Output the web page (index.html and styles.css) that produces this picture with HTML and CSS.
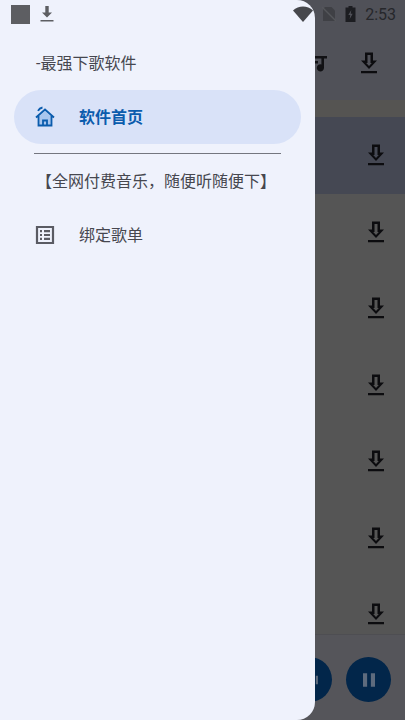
FILE: index.html
```html
<!DOCTYPE html>
<html lang="zh-CN">
<head>
  <meta charset="UTF-8" />
  <meta name="viewport" content="width=device-width, initial-scale=1.0" />
  <title>下歌软件</title>
  <link rel="stylesheet" href="styles.css">
</head>
<body>
  <div class="app">

    <!-- Page behind the scrim -->
    <div class="main">
      <div class="header">
        <svg class="music-icon" viewBox="0 0 24 24"><path d="M5 5h16v2.600h-3v9.200a3.600 3.600 0 1 1-2.600-3.400V7.600H5zM5 10h7v2.400H5z"/></svg>
        <svg class="dl-icon" viewBox="0 0 24 24"><path d="M8 1.500h8v8h4L12 18 4 9.500h4zM10.500 4v8H9.200L12 15l2.800-3h-1.300V4zM4 20h16v2.200H4z" fill-rule="evenodd"/></svg>
      </div>
      <div class="band"></div>
      <div class="list">
        <div class="row row-active"><svg class="dl-icon" viewBox="0 0 24 24"><path d="M8 1.500h8v8h4L12 18 4 9.500h4zM10.500 4v8H9.200L12 15l2.800-3h-1.300V4zM4 20h16v2.200H4z" fill-rule="evenodd"/></svg></div>
        <div class="row"><svg class="dl-icon" viewBox="0 0 24 24"><path d="M8 1.500h8v8h4L12 18 4 9.500h4zM10.500 4v8H9.200L12 15l2.800-3h-1.300V4zM4 20h16v2.200H4z" fill-rule="evenodd"/></svg></div>
        <div class="row"><svg class="dl-icon" viewBox="0 0 24 24"><path d="M8 1.500h8v8h4L12 18 4 9.500h4zM10.500 4v8H9.200L12 15l2.800-3h-1.300V4zM4 20h16v2.200H4z" fill-rule="evenodd"/></svg></div>
        <div class="row"><svg class="dl-icon" viewBox="0 0 24 24"><path d="M8 1.500h8v8h4L12 18 4 9.500h4zM10.500 4v8H9.200L12 15l2.800-3h-1.300V4zM4 20h16v2.200H4z" fill-rule="evenodd"/></svg></div>
        <div class="row"><svg class="dl-icon" viewBox="0 0 24 24"><path d="M8 1.500h8v8h4L12 18 4 9.500h4zM10.500 4v8H9.200L12 15l2.800-3h-1.300V4zM4 20h16v2.200H4z" fill-rule="evenodd"/></svg></div>
        <div class="row"><svg class="dl-icon" viewBox="0 0 24 24"><path d="M8 1.500h8v8h4L12 18 4 9.500h4zM10.500 4v8H9.200L12 15l2.800-3h-1.300V4zM4 20h16v2.200H4z" fill-rule="evenodd"/></svg></div>
        <div class="row"><svg class="dl-icon" viewBox="0 0 24 24"><path d="M8 1.500h8v8h4L12 18 4 9.500h4zM10.500 4v8H9.200L12 15l2.800-3h-1.300V4zM4 20h16v2.200H4z" fill-rule="evenodd"/></svg></div>
      </div>
      <div class="player">
        <div class="round-btn">
          <svg class="skip-icon" viewBox="0 0 24 24"><path d="M8 6l10 6-10 6zM19 7h2.500v10H19z"/></svg>
        </div>
        <div class="round-btn">
          <svg class="pause-icon" viewBox="0 0 24 24"><path d="M4 3h5.500v18H4zM14.500 3H20v18h-5.500z"/></svg>
        </div>
      </div>
    </div>

    <!-- Drawer -->
    <div class="drawer">
      <div class="drawer-title">-最强下歌软件</div>
      <div class="nav-item nav-item-active">
        <svg class="nav-icon" viewBox="0 0 24 24">
          <path class="home-fill" d="M6 11.500L12 6l6 5.500V20H6z"/>
          <path class="home-line" d="M3 12.500L12 4.500l9 8M5.500 11v9.500h13V11M10 20.500v-5h4v5"/>
          <path class="home-line" d="M5 5.800C6 3.800 7.500 2.800 9.500 2.500"/>
        </svg>
        <span class="nav-label">软件首页</span>
      </div>
      <div class="divider"></div>
      <div class="section-title">【全网付费音乐，随便听随便下】</div>
      <div class="nav-item">
        <svg class="nav-icon" viewBox="0 0 24 24">
          <path class="list-line" d="M4 4h16v16H4z"/>
          <path class="list-line" d="M7 8.200h2M11 8.200h6M7 12h2M11 12h6M7 15.800h2M11 15.800h6"/>
        </svg>
        <span class="nav-label">绑定歌单</span>
      </div>
    </div>

    <!-- Status bar, over everything -->
    <div class="statusbar">
      <div class="status-left">
        <div class="app-square"></div>
        <svg class="status-dl" viewBox="0 0 18 18"><path d="M7.300 1h3.400v6.500h3.300L9 12.500 4 7.500h3.300zM2.500 15h13v1.500h-13z"/></svg>
      </div>
      <div class="status-right">
        <svg class="wifi" viewBox="0 0 20 16"><path d="M0 4.500C5.500-.7 14.500-.7 20 4.500L10 16z"/></svg>
        <svg class="nosim" viewBox="0 0 14 16"><path d="M3 1h6.500L13 4.500V15H1V3z"/><path class="nosim-slash" d="M0 1l14 14"/></svg>
        <svg class="battery" viewBox="0 0 10 16"><path d="M3 0h4v1.500h3V16H0V1.500h3zM5.800 4L2.800 9h2L4.200 13l3-5.200h-2z" fill-rule="evenodd"/></svg>
        <span class="clock">2:53</span>
      </div>
    </div>

  </div>
</body>
</html>
```

FILE: styles.css
```css
* {
  box-sizing: border-box;
}

body {
  margin: 0;
  font-family: Roboto, "Noto Sans CJK SC", sans-serif;
}

.app {
  position: relative;
  width: 405px;
  height: 720px;
  overflow: hidden;
  background: #55555a;
}

.main {
  display: flex;
  flex-direction: column;
  height: 720px;
}

.header {
  height: 100px;
  flex-shrink: 0;
  padding: 26px 24px 0 0;
  display: flex;
  justify-content: flex-end;
  align-items: center;
  gap: 27px;
  background: #505158;
}

.band {
  height: 17px;
  flex-shrink: 0;
  background: #555452;
}

.list {
  flex: 1;
  min-height: 0;
  overflow: hidden;
  background: #555555;
}

.row {
  height: 76.5px;
  padding-right: 17px;
  display: flex;
  justify-content: flex-end;
  align-items: center;
}

.row-active {
  background: #454853;
}

.dl-icon {
  width: 24px;
  height: 24px;
  fill: #0c0c0f;
}

.music-icon {
  width: 24px;
  height: 24px;
  fill: #111114;
}

.player {
  height: 85px;
  flex-shrink: 0;
  padding: 4px 14px 0 0;
  display: flex;
  justify-content: flex-end;
  align-items: center;
  gap: 14px;
  background: #55555a;
  box-shadow: 0 -1px 0 #4e4e52;
}

.round-btn {
  width: 45px;
  height: 45px;
  border-radius: 50%;
  background: #02264a;
  display: flex;
  justify-content: center;
  align-items: center;
}

.pause-icon {
  width: 18px;
  height: 18px;
  fill: #5e6b7d;
}

.skip-icon {
  width: 20px;
  height: 20px;
  fill: #5e6b7d;
}

.drawer {
  position: absolute;
  top: 0;
  left: 0;
  bottom: 0;
  width: 315px;
  padding: 36px 14px 0;
  background: #eff2fc;
  border-radius: 0 18px 18px 0;
}

.drawer-title {
  height: 54px;
  padding: 0 0 2px 22px;
  display: flex;
  align-items: center;
  font-size: 16px;
  color: #46474f;
}

.nav-item {
  height: 54px;
  padding-left: 19px;
  display: flex;
  align-items: center;
  gap: 22px;
  font-size: 16px;
  color: #46474f;
}

.nav-label {
  margin-bottom: 2px;
}

.nav-item-active {
  width: 287px;
  border-radius: 27px;
  background: #d9e2f8;
  color: #0b5cad;
  font-weight: 700;
}

.nav-icon {
  width: 24px;
  height: 24px;
  flex-shrink: 0;
}

.home-line {
  fill: none;
  stroke: #0b5cad;
  stroke-width: 1.800;
}

.home-fill {
  fill: #a9c6ee;
}

.list-line {
  fill: none;
  stroke: #5a5b63;
  stroke-width: 2.200;
}

.divider {
  height: 1px;
  margin: 9px 20px 0;
  background: #74767f;
}

.section-title {
  height: 54px;
  padding: 0 0 2px 22px;
  display: flex;
  align-items: center;
  font-size: 16px;
  white-space: nowrap;
  color: #46474f;
}

.statusbar {
  position: absolute;
  top: 0;
  left: 0;
  right: 0;
  height: 28px;
  padding: 0 9px 0 11px;
  display: flex;
  justify-content: space-between;
  align-items: center;
}

.status-left {
  display: flex;
  align-items: center;
  gap: 8px;
}

.app-square {
  width: 19px;
  height: 19px;
  background: #5d5e62;
}

.status-dl {
  width: 18px;
  height: 18px;
  fill: #5d5e62;
}

.status-right {
  display: flex;
  align-items: center;
  gap: 9px;
  color: #2a2b30;
}

.wifi {
  width: 20px;
  height: 16px;
  fill: #46474c;
  margin-left: 2px;
}

.nosim {
  width: 14px;
  height: 16px;
  fill: #3f4045;
}

.nosim-slash {
  stroke: #55565b;
  stroke-width: 1.500;
}

.battery {
  width: 11px;
  height: 16px;
  fill: #1c1d21;
}

.clock {
  font-size: 16px;
  color: #26272b;
}
```
